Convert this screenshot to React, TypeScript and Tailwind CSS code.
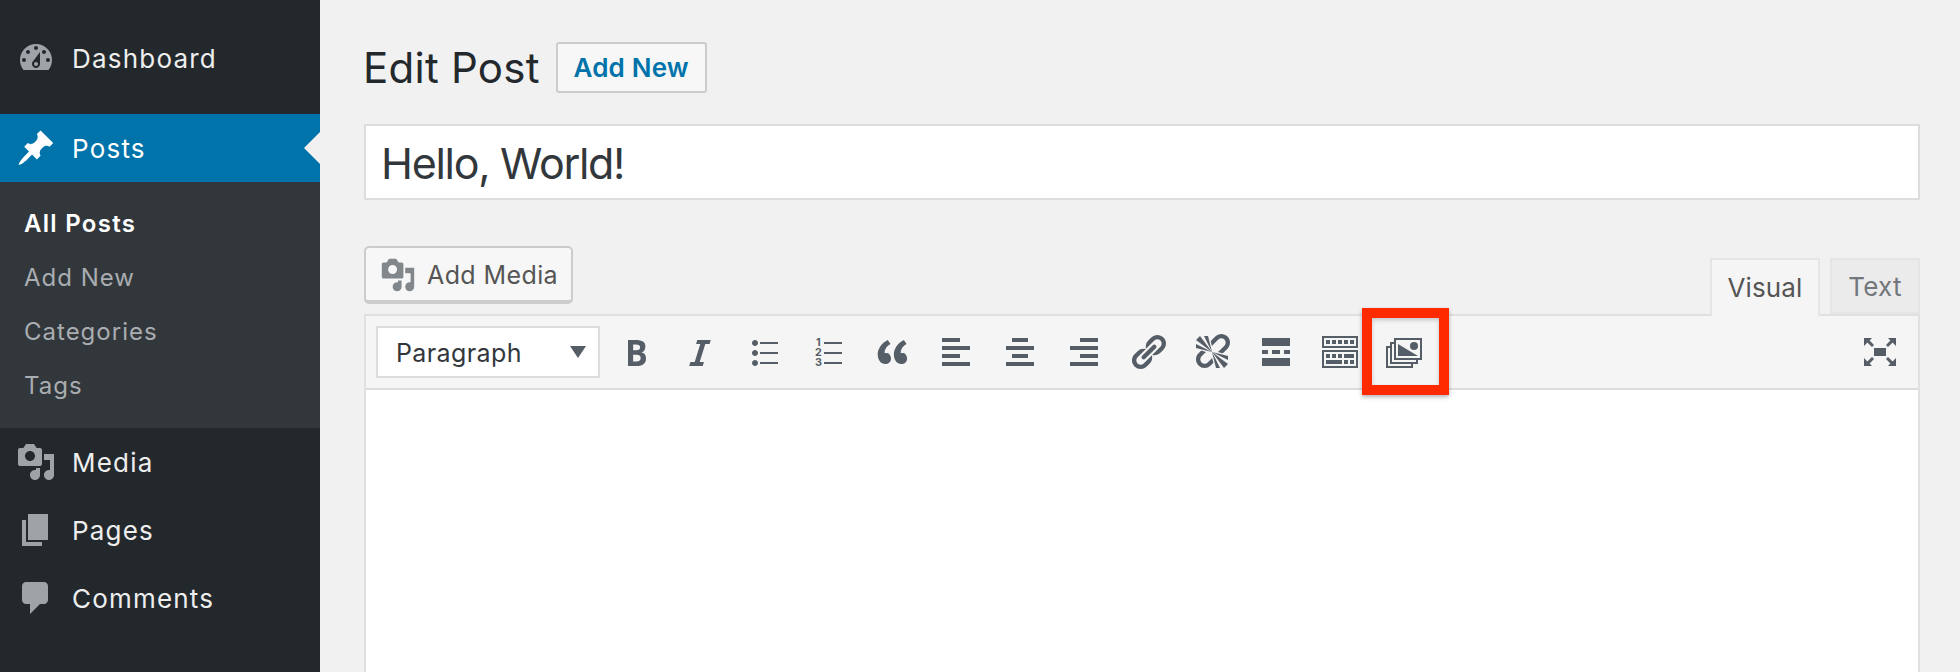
const dashicons = {
  dashboard:
    'M3.76 16h12.48c1.1-1.37 1.76-3.11 1.76-5 0-4.42-3.58-8-8-8s-8 3.58-8 8c0 1.89.66 3.63 1.76 5zM10 4c.55 0 1 .45 1 1s-.45 1-1 1-1-.45-1-1 .45-1 1-1zM6 6c.55 0 1 .45 1 1s-.45 1-1 1-1-.45-1-1 .45-1 1-1zm8 0c.55 0 1 .45 1 1s-.45 1-1 1-1-.45-1-1 .45-1 1-1zm-5.37 5.55L12 7v6c0 1.1-.9 2-2 2s-2-.9-2-2c0-.57.24-1.08.63-1.45zM4 10c.55 0 1 .45 1 1s-.45 1-1 1-1-.45-1-1 .45-1 1-1zm12 0c.55 0 1 .45 1 1s-.45 1-1 1-1-.45-1-1 .45-1 1-1zm-5 3c0-.55-.45-1-1-1s-1 .45-1 1 .45 1 1 1 1-.45 1-1z',
  pin: 'M10.44 3.02l1.82-1.82 6.36 6.35-1.83 1.82c-1.05-.68-2.48-.57-3.41.36l-.75.75c-.92.93-1.04 2.35-.35 3.41l-1.83 1.82-2.41-2.41-2.8 2.79c-.42.42-3.38 2.71-3.8 2.29s1.86-3.39 2.28-3.81l2.79-2.79L4.1 9.36l1.83-1.82c1.05.69 2.48.57 3.4-.36l.75-.75c.93-.92 1.05-2.35.36-3.41z',
  media:
    'M13 11V4c0-.55-.45-1-1-1h-1.67L9 1H5L3.67 3H2c-.55 0-1 .45-1 1v7c0 .55.45 1 1 1h10c.55 0 1-.45 1-1zM7 4.5c1.38 0 2.5 1.12 2.5 2.5S8.38 9.5 7 9.5 4.5 8.38 4.5 7 5.62 4.5 7 4.5zM14 6h5v10.5c0 1.38-1.12 2.5-2.5 2.5S14 17.88 14 16.5s1.12-2.5 2.5-2.5c.17 0 .34.02.5.05V9h-3V6zm-4 8.05V13h2v3.5c0 1.38-1.12 2.5-2.5 2.5S7 17.88 7 16.5 8.12 14 9.5 14c.17 0 .34.02.5.05z',
  pages: 'M6 15V2h10v13H6zm-1 1h8v2H3V5h2v11z',
  comments: 'M5 2h9c1.1 0 2 .9 2 2v7c0 1.1-.9 2-2 2h-2l-5 5v-5H5c-1.1 0-2-.9-2-2V4c0-1.1.9-2 2-2z',
  bold: 'M6 4v13h4.54c1.37 0 2.46-.33 3.26-1 .8-.66 1.2-1.58 1.2-2.77 0-.84-.17-1.51-.51-2.01s-.9-.85-1.67-1.03v-.09c.57-.1 1.02-.4 1.36-.9s.51-1.13.51-1.91c0-1.14-.39-1.98-1.17-2.5C12.75 4.26 11.5 4 9.78 4H6zm2.57 5.15V6.26h1.36c.73 0 1.27.11 1.61.32.34.22.51.58.51 1.07 0 .54-.16.92-.47 1.15s-.82.35-1.51.35h-1.5zm0 2.19h1.6c1.44 0 2.16.53 2.16 1.61 0 .6-.17 1.05-.51 1.34s-.86.45-1.57.45H8.57v-3.4z',
  italic: 'M14.78 6h-2.13l-2.8 9h2.12l-.62 2H4.6l.62-2h2.14l2.8-9H8.03l.62-2h6.75z',
  ul: 'M5.5 7C4.67 7 4 6.33 4 5.5 4 4.68 4.67 4 5.5 4 6.32 4 7 4.68 7 5.5 7 6.33 6.32 7 5.5 7zM8 5h9v1H8V5zm-2.5 7c-.83 0-1.5-.67-1.5-1.5C4 9.68 4.67 9 5.5 9c.82 0 1.5.68 1.5 1.5 0 .83-.68 1.5-1.5 1.5zM8 10h9v1H8v-1zm-2.5 7c-.83 0-1.5-.67-1.5-1.5 0-.82.67-1.5 1.5-1.5.82 0 1.5.68 1.5 1.5 0 .83-.68 1.5-1.5 1.5zM8 15h9v1H8v-1z',
  quote:
    'M9.49 13.22c0-.74-.2-1.38-.61-1.9-.62-.78-1.83-.88-2.53-.72-.29-1.65 1.11-3.75 2.92-4.65L7.88 4c-2.73 1.3-5.42 4.28-4.96 8.05C3.21 14.43 4.59 16 6.54 16c.85 0 1.56-.25 2.12-.75s.83-1.18.83-2.03zm8.05 0c0-.74-.2-1.38-.61-1.9-.63-.78-1.83-.88-2.53-.72-.29-1.65 1.11-3.75 2.92-4.65L15.93 4c-2.73 1.3-5.41 4.28-4.95 8.05.29 2.38 1.66 3.95 3.61 3.95.85 0 1.56-.25 2.12-.75s.83-1.18.83-2.03z',
  alignLeft: 'M12 5V3H3v2h9zm5 4V7H3v2h14zm-5 4v-2H3v2h9zm5 4v-2H3v2h14z',
  alignCenter: 'M14 5V3H6v2h8zm3 4V7H3v2h14zm-3 4v-2H6v2h8zm3 4v-2H3v2h14z',
  alignRight: 'M17 5V3H8v2h9zm0 4V7H3v2h14zm0 4v-2H8v2h9zm0 4v-2H3v2h14z',
  link: 'M17.74 2.76c1.68 1.69 1.68 4.41 0 6.1l-1.53 1.52c-1.12 1.12-2.7 1.47-4.14 1.09l2.62-2.61.76-.77.76-.76c.84-.84.84-2.2 0-3.04-.84-.85-2.2-.85-3.04 0l-.77.76-3.38 3.38c-.37-1.44-.02-3.02 1.1-4.14l1.52-1.53c1.69-1.68 4.42-1.68 6.1 0zM8.59 13.43l5.34-5.34c.42-.42.42-1.1 0-1.52-.44-.43-1.13-.39-1.53 0l-5.33 5.34c-.42.42-.42 1.1 0 1.52.44.43 1.13.39 1.52 0zm-.76 2.29l4.14-4.15c.38 1.44.03 3.02-1.09 4.14l-1.52 1.53c-1.69 1.68-4.41 1.68-6.1 0-1.68-1.68-1.68-4.42 0-6.1l1.53-1.52c1.12-1.12 2.7-1.47 4.14-1.1l-4.14 4.15c-.85.84-.85 2.2 0 3.05.84.84 2.2.84 3.04 0z',
  unlink:
    'M17.74 2.26c1.68 1.69 1.68 4.41 0 6.1l-1.53 1.52c-.32.33-.69.58-1.08.77L13 10l1.69-1.64.76-.77.76-.76c.84-.84.84-2.2 0-3.04-.84-.85-2.2-.85-3.04 0l-.77.76-.76.76L10 7l-.65-2.14c.19-.38.44-.75.77-1.07l1.52-1.53c1.69-1.68 4.42-1.68 6.1 0zM2 4l8 6-6-8zm4-2l4 8-2-8H6zM2 6l8 4-8-2V6zm7.36 7.69L10 13l.74 2.35-1.38 1.39c-1.69 1.68-4.41 1.68-6.1 0-1.68-1.68-1.68-4.42 0-6.1l1.39-1.38L7 10l-.69.64-1.52 1.53c-.85.84-.85 2.2 0 3.04.84.85 2.2.85 3.04 0zM18 16l-8-6 6 8zm-4 2l-4-8 2 8h2zm4-4l-8-4 8 2v2z',
  more: 'M17 7V3H3v4h14zM6 11V9H3v2h3zm6 0V9H8v2h4zm5 0V9h-3v2h3zm0 6v-4H3v4h14z',
  kitchensink:
    'M19 2v6H1V2h18zm-1 5V3H2v4h16zM5 4v2H3V4h2zm3 0v2H6V4h2zm3 0v2H9V4h2zm3 0v2h-2V4h2zm3 0v2h-2V4h2zm2 5v9H1V9h18zm-1 8v-7H2v7h16zM5 11v2H3v-2h2zm3 0v2H6v-2h2zm3 0v2H9v-2h2zm6 0v2h-5v-2h5zm-6 3v2H3v-2h8zm3 0v2h-2v-2h2zm3 0v2h-2v-2h2z',
  expand:
    'M7 8h6v4H7zM2 3h4L4.8 4.2 7 6.5 6 7.5 3.7 5.2 2 7zM18 3h-4l1.2 1.2L13 6.5l1 1 2.3-2.3L18 7zM2 17h4l-1.2-1.2L7 13.5l-1-1-2.3 2.3L2 13zM18 17h-4l1.2-1.2L13 13.5l1-1 2.3 2.3L18 13z',
}

const Dashicon = ({ d, className }: { d: string; className?: string }) => (
  <svg viewBox="0 0 20 20" fill="currentColor" className={className}>
    <path d={d} />
  </svg>
)

const NavItem = ({ icon, label }: { icon: string; label: string }) => (
  <div className="flex h-[68px] items-center text-[#eeeeee]">
    <Dashicon d={icon} className="ml-4 h-10 w-10 text-[#9ea3a8]" />
    <span className="ml-4 text-[26px] tracking-[1.2px]">{label}</span>
  </div>
)

const OrderedListIcon = () => (
  <svg viewBox="0 0 20 20" className="h-10 w-10 text-[#555d66]" fill="currentColor">
    <path d="M8 5h9v1H8zM8 10h9v1H8zM8 15h9v1H8z" />
    <text x="5.2" y="7" fontSize="5.4" fontWeight="700" textAnchor="middle" fontFamily="Inter, sans-serif">1</text>
    <text x="5.2" y="12" fontSize="5.4" fontWeight="700" textAnchor="middle" fontFamily="Inter, sans-serif">2</text>
    <text x="5.2" y="17" fontSize="5.4" fontWeight="700" textAnchor="middle" fontFamily="Inter, sans-serif">3</text>
  </svg>
)

const GalleryIcon = () => (
  <svg viewBox="0 0 40 40" className="h-10 w-10 text-[#555d66]">
    <rect x="3" y="15" width="25" height="20" fill="#f5f5f5" stroke="currentColor" strokeWidth="2" />
    <rect x="7" y="11" width="26" height="20" fill="#f5f5f5" stroke="currentColor" strokeWidth="2" />
    <rect x="11" y="7" width="26" height="20" fill="#f5f5f5" stroke="currentColor" strokeWidth="2" />
    <path d="M14 12v12h20z" fill="currentColor" />
    <circle cx="30" cy="14" r="4" fill="currentColor" />
  </svg>
)

const ToolbarButton = ({ d }: { d: string }) => (
  <div className="flex h-[52px] w-16 items-center justify-center">
    <Dashicon d={d} className="h-10 w-10 text-[#555d66]" />
  </div>
)

export default function App() {
  return (
    <div className="flex h-[672px] w-[1960px] overflow-hidden bg-[#f1f1f1] font-[Inter,sans-serif]">
      {/* Admin menu */}
      <aside className="flex w-[320px] shrink-0 flex-col bg-[#23282d] pt-6">
        <NavItem icon={dashicons.dashboard} label="Dashboard" />
        <div className="h-[22px]" />
        <div className="relative flex h-[68px] items-center bg-[#0073aa] text-white">
          <Dashicon d={dashicons.pin} className="ml-4 h-10 w-10" />
          <span className="ml-4 text-[26px] tracking-[1.2px]">Posts</span>
          <span className="absolute top-[18px] right-0 h-0 w-0 border-y-[16px] border-r-[16px] border-y-transparent border-r-[#f1f1f1]" />
        </div>
        <div className="flex h-[246px] flex-col bg-[#32373c] pt-[15px] pl-6 text-[24px] leading-[54px] tracking-[1px] text-[#a9adb1]">
          <span className="font-semibold tracking-[1.3px] text-white">All Posts</span>
          <span>Add New</span>
          <span>Categories</span>
          <span>Tags</span>
        </div>
        <NavItem icon={dashicons.media} label="Media" />
        <NavItem icon={dashicons.pages} label="Pages" />
        <NavItem icon={dashicons.comments} label="Comments" />
      </aside>

      {/* Edit screen */}
      <main className="flex min-w-0 flex-1 flex-col pr-10 pl-11">
        <div className="flex items-center pt-[42px]">
          <h1 className="-ml-px text-[42px] leading-[50px] tracking-[0.25px] text-[#23282d]">Edit Post</h1>
          <button className="ml-4 h-[51px] w-[151px] rounded-[3px] border-2 border-[#cccccc] bg-[#f7f7f7] text-[26px] font-semibold tracking-[0.2px] text-[#0073aa]">
            Add New
          </button>
        </div>

        <div className="mt-[31px] flex h-[76px] items-center border-2 border-[#dddddd] bg-white pt-[2px] pl-[15px] text-[43px] tracking-[-1.3px] text-[#32373c]">
          Hello, World!
        </div>

        <div className="mt-[46px] flex h-[68px] items-start justify-between">
          <button className="flex h-[58px] w-[209px] items-center rounded-[5px] border-2 border-b-4 border-[#cccccc] bg-[#f7f7f7] pt-[2px] pl-[14px] text-[25px] text-[#555555]">
            <Dashicon d={dashicons.media} className="h-9 w-9 shrink-0 text-[#82878c]" />
            <span className="ml-[11px] pt-[2px] tracking-[0.4px]">Add Media</span>
          </button>
          <div className="relative z-10 mt-3 flex">
            <div className="flex h-[58px] w-[110px] items-center justify-center border-2 border-b-0 border-[#e5e5e5] bg-[#f5f5f5] pb-[2px] text-[26px] tracking-[0.1px] text-[#555555]">
              Visual
            </div>
            <div className="ml-[10px] flex h-[56px] w-[90px] items-center justify-center border-2 border-[#e5e5e5] bg-[#ebebeb] text-[26px] tracking-[0.2px] text-[#72777c]">
              Text
            </div>
          </div>
        </div>

        <div className="flex flex-1 flex-col border-x-2 border-t-2 border-[#e0e0e0]">
          <div className="flex h-[74px] items-center border-b-2 border-[#dddddd] bg-[#f5f5f5] pr-[18px] pl-[10px]">
            <div className="mr-1 flex h-[52px] w-[224px] items-center justify-between border-2 border-[#dddddd] bg-white pr-3 pl-[18px] text-[25px] tracking-[0.4px] text-[#32373c]">
              <span className="pt-[3px]">Paragraph</span>
              <span className="h-0 w-0 border-x-[8px] border-t-[12px] border-x-transparent border-t-[#555d66]" />
            </div>
            <ToolbarButton d={dashicons.bold} />
            <ToolbarButton d={dashicons.italic} />
            <ToolbarButton d={dashicons.ul} />
            <div className="flex h-[52px] w-16 items-center justify-center">
              <OrderedListIcon />
            </div>
            <ToolbarButton d={dashicons.quote} />
            <ToolbarButton d={dashicons.alignLeft} />
            <ToolbarButton d={dashicons.alignCenter} />
            <ToolbarButton d={dashicons.alignRight} />
            <ToolbarButton d={dashicons.link} />
            <ToolbarButton d={dashicons.unlink} />
            <ToolbarButton d={dashicons.more} />
            <ToolbarButton d={dashicons.kitchensink} />
            <div className="relative flex h-[52px] w-16 items-center justify-center">
              <GalleryIcon />
              {/* red callout round the gallery button */}
              <span className="absolute top-[-18px] left-[-10px] h-[87px] w-[87px] border-[10px] border-[#ff2a00] shadow-[0_2px_4px_rgba(0,0,0,0.3),inset_0_2px_4px_rgba(0,0,0,0.2)]" />
            </div>
            <Dashicon d={dashicons.expand} className="ml-auto h-10 w-10 text-[#555d66]" />
          </div>
          <div className="flex-1 bg-white" />
        </div>
      </main>
    </div>
  )
}
